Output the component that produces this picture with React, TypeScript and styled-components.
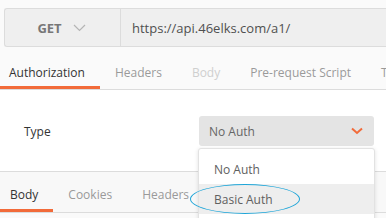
import styled, { createGlobalStyle } from 'styled-components';

const GlobalStyle = createGlobalStyle`
  html, body {
    margin: 0;
    padding: 0;
    background: #fafafa;
  }
  * {
    box-sizing: border-box;
  }
`;

const Page = styled.div`
  width: 386px;
  height: 218px;
  overflow: hidden;
  background: #fafafa;
  font-family: 'Open Sans', 'Noto Sans', sans-serif;
  font-size: 12px;
`;

const UrlRow = styled.div`
  padding: 8px 0 0 4px;
`;

const UrlBox = styled.div`
  display: flex;
  height: 39px;
  background: #efefef;
  border: 1px solid #dcdcdc;
  border-right: 0;
  border-radius: 3px 0 0 3px;
  font-size: 13px;
`;

const MethodCell = styled.div`
  width: 116px;
  display: flex;
  align-items: center;
  justify-content: center;
  gap: 11px;
  border-right: 1px solid #dcdcdc;
  color: #777;
  font-weight: 700;
  padding-right: 2px;
`;

const UrlText = styled.div`
  display: flex;
  align-items: center;
  padding-left: 11px;
  color: #505050;
  white-space: nowrap;
`;

const TabBar = styled.div<{ $bg: string; $top?: boolean }>`
  display: flex;
  background: ${(p) => p.$bg};
  border-bottom: 1px solid #dcdcdc;
  border-top: ${(p) => (p.$top ? '1px solid #dcdcdc' : '0')};
  white-space: nowrap;
`;

const Tab = styled.div<{ $active?: boolean; $muted?: boolean; $h: number; $pt: number }>`
  height: ${(p) => p.$h}px;
  display: flex;
  align-items: center;
  padding: ${(p) => p.$pt}px 15px 0;
  border-bottom: 3px solid ${(p) => (p.$active ? '#f26b3a' : 'transparent')};
  color: ${(p) => (p.$active ? '#333' : p.$muted ? '#cfcfcf' : '#9a9a9a')};
  &:first-child {
    margin-left: ${(p) => (p.$h > 36 ? -5 : -6)}px;
  }
`;

const TopTabs = styled(TabBar)`
  margin-top: 8px;
`;

const Content = styled.div`
  height: 81px;
  background: #fff;
  display: flex;
  align-items: flex-start;
  padding: 26px 0 0 24px;
`;

const Label = styled.div`
  width: 175px;
  height: 30px;
  display: flex;
  align-items: center;
  color: #333;
`;

const SelectWrap = styled.div`
  position: relative;
  width: 175px;
`;

const Select = styled.div`
  height: 30px;
  background: #e4e4e4;
  border-radius: 3px;
  display: flex;
  align-items: center;
  justify-content: space-between;
  padding: 0 11px 0 10px;
  color: #666;
`;

const Menu = styled.div`
  position: absolute;
  top: 32px;
  left: -1px;
  width: 177px;
  padding-top: 5px;
  background: #fff;
  border: 1px solid #e2e2e2;
  border-radius: 3px;
  box-shadow: 0 1px 4px rgba(0, 0, 0, 0.12);
  z-index: 2;
`;

const MenuItem = styled.div<{ $hover?: boolean }>`
  position: relative;
  height: 30px;
  display: flex;
  align-items: center;
  padding-left: 15px;
  color: #606060;
  background: ${(p) => (p.$hover ? '#eeeeee' : 'transparent')};
`;

const Ring = styled.div`
  position: absolute;
  left: -9px;
  top: 0;
  width: 110px;
  height: 30px;
  border: 1.5px solid #1ea5d8;
  border-radius: 50%;
`;

const BottomTabs = styled(TabBar)``;

export default function App() {
  return (
    <Page>
      <GlobalStyle />
      <UrlRow>
        <UrlBox>
          <MethodCell>
            <span>GET</span>
            <svg width="13" height="8" viewBox="0 0 13 8">
              <polyline points="1,1 6.5,6.5 12,1" fill="none" stroke="#b5b5b5" strokeWidth="1.2" />
            </svg>
          </MethodCell>
          <UrlText>https://api.46elks.com/a1/</UrlText>
        </UrlBox>
      </UrlRow>
      <TopTabs $bg="#fafafa">
        <Tab $active $h={34} $pt={3}>Authorization</Tab>
        <Tab $h={34} $pt={3}>Headers</Tab>
        <Tab $muted $h={34} $pt={3}>Body</Tab>
        <Tab $h={34} $pt={3}>Pre-request Script</Tab>
        <Tab $h={34} $pt={3}>Tests</Tab>
      </TopTabs>
      <Content>
        <Label>Type</Label>
        <SelectWrap>
          <Select>
            <span>No Auth</span>
            <svg width="12" height="8" viewBox="0 0 12 8">
              <polyline points="1,1.5 6,6 11,1.5" fill="none" stroke="#f26b3a" strokeWidth="2" />
            </svg>
          </Select>
          <Menu>
            <MenuItem>No Auth</MenuItem>
            <MenuItem $hover>
              Basic Auth
              <Ring />
            </MenuItem>
            <MenuItem>Digest Auth</MenuItem>
          </Menu>
        </SelectWrap>
      </Content>
      <BottomTabs $bg="#f8f8f8" $top>
        <Tab $active $h={40} $pt={7}>Body</Tab>
        <Tab $h={40} $pt={7}>Cookies</Tab>
        <Tab $h={40} $pt={7}>Headers</Tab>
        <Tab $h={40} $pt={7}>Tests</Tab>
      </BottomTabs>
    </Page>
  );
}
